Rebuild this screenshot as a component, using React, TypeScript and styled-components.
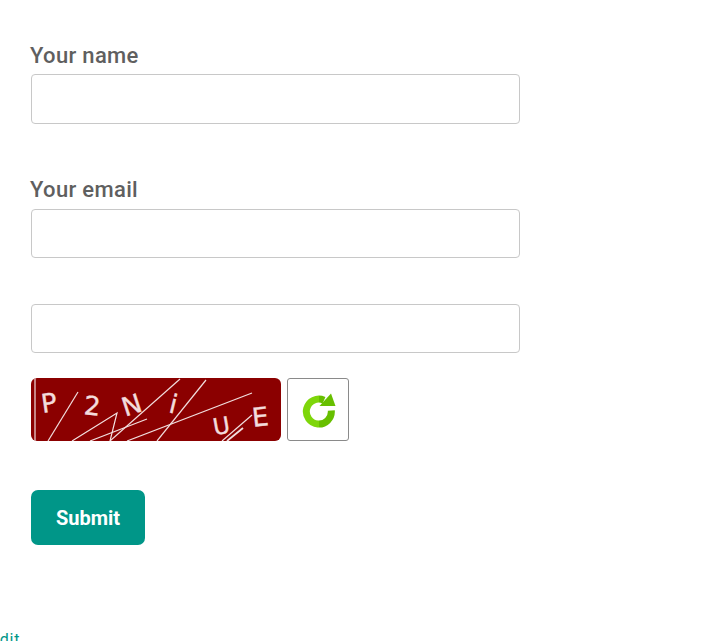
import * as React from 'react';
import styled, {createGlobalStyle} from 'styled-components';

const GlobalStyle = createGlobalStyle`
	html, body {
		margin: 0;
		padding: 0;
		background: #fff;
		overflow: hidden;
	}
`;

const Page = styled.div`
	width: 701px;
	height: 641px;
	overflow: hidden;
	font-family: Roboto, "Liberation Sans", sans-serif;
`;

const Form = styled.form`
	display: flex;
	flex-direction: column;
	width: 489px;
	padding: 41px 0 0 31px;
`;

const Field = styled.div<{$gap: number}>`
	display: flex;
	flex-direction: column;
	margin-bottom: ${p => p.$gap}px;
`;

const Label = styled.label<{$height: number}>`
	margin-left: -1px;
	height: ${p => p.$height}px;
	font-size: 22px;
	line-height: 29px;
	font-weight: 500;
	letter-spacing: 0.33px;
	color: #5f5f5f;
`;

const Input = styled.input<{$height: number}>`
	box-sizing: border-box;
	width: 489px;
	height: ${p => p.$height}px;
	padding: 0 12px;
	background: #fff;
	border: 1px solid #c8c8c8;
	border-radius: 4px;
	outline: none;
`;

const CaptchaRow = styled.div`
	display: flex;
	gap: 6px;
	margin-bottom: 49px;
`;

const CaptchaImage = styled.svg`
	display: block;
	width: 250px;
	height: 63px;
	border-radius: 6px;
`;

const CaptchaLetter = styled.text<{$size?: number}>`
	font-family: "DejaVu Sans", sans-serif;
	font-size: ${p => p.$size ?? 26}px;
	fill: #f3dcdc;
	stroke: #f3dcdc;
	stroke-width: 0.4px;
`;

const RefreshButton = styled.button`
	display: flex;
	align-items: center;
	justify-content: center;
	box-sizing: border-box;
	width: 62px;
	height: 63px;
	padding: 0;
	background: #fff;
	border: 1px solid #8a8a8a;
	border-radius: 3px;
`;

const SubmitButton = styled.button`
	width: 114px;
	height: 55px;
	padding: 0;
	border: none;
	border-radius: 7px;
	background: #009688;
	color: #fff;
	font-family: Roboto, sans-serif;
	font-size: 20px;
	font-weight: 700;
`;

const FooterLink = styled.a`
	display: block;
	margin: 86px 0 0 -10px;
	font-size: 16px;
	line-height: 18px;
	letter-spacing: 0.8px;
	color: #009688;
`;

const Captcha = () => (
	<CaptchaImage viewBox="0 0 250 63">
		<rect width="250" height="63" fill="#8b0000" />
		<g stroke="#f1dede" strokeWidth="1.2" fill="none">
			<path d="M4 0V63" />
			<path d="M47 14L17 63" />
			<path d="M41 63L86 35L79 63" />
			<path d="M59 63L116 41" />
			<path d="M79 63L149 1" />
			<path d="M96 63L221 15" />
			<path d="M126 63L175 2" />
			<path d="M191 63L221 37" />
			<path d="M196 63L212 50" strokeWidth="1.8" />
		</g>
		<CaptchaLetter x="10" y="34" transform="rotate(-8 17 24)">P</CaptchaLetter>
		<CaptchaLetter x="53" y="37" transform="rotate(5 61 28)">2</CaptchaLetter>
		<CaptchaLetter x="91" y="36" transform="rotate(-18 101 27)">N</CaptchaLetter>
		<CaptchaLetter x="139" y="35" transform="rotate(14 142 25)">i</CaptchaLetter>
		<CaptchaLetter $size={23} x="182" y="56" transform="rotate(-10 190 48)">U</CaptchaLetter>
		<CaptchaLetter x="221" y="48" transform="rotate(-6 229 38)">E</CaptchaLetter>
	</CaptchaImage>
);

const RefreshIcon = () => (
	<svg width="36" height="36" viewBox="0 0 36 36">
		<defs>
			<linearGradient id="refresh-green" x1="0" x2="1" y1="0" y2="0">
				<stop offset="0.5" stopColor="#7ed60a" />
				<stop offset="0.5" stopColor="#67bf00" />
			</linearGradient>
		</defs>
		<path
			d="M31.3 18.5A12.5 12.5 0 1 1 24 8.2"
			fill="none"
			stroke="url(#refresh-green)"
			strokeWidth="7"
		/>
		<path d="M31 1.5L35.5 14H19.5Z" fill="#67bf00" />
	</svg>
);

export default function App() {
	return (
		<Page>
			<GlobalStyle />
			<Form onSubmit={e => e.preventDefault()}>
				<Field $gap={51}>
					<Label $height={33}>Your name</Label>
					<Input type="text" $height={50} />
				</Field>
				<Field $gap={46}>
					<Label $height={34}>Your email</Label>
					<Input type="text" $height={49} />
				</Field>
				<Field $gap={25}>
					<Input type="text" $height={49} />
				</Field>
				<CaptchaRow>
					<Captcha />
					<RefreshButton type="button">
						<RefreshIcon />
					</RefreshButton>
				</CaptchaRow>
				<SubmitButton type="submit">Submit</SubmitButton>
			</Form>
			<FooterLink>Edit</FooterLink>
		</Page>
	);
}
